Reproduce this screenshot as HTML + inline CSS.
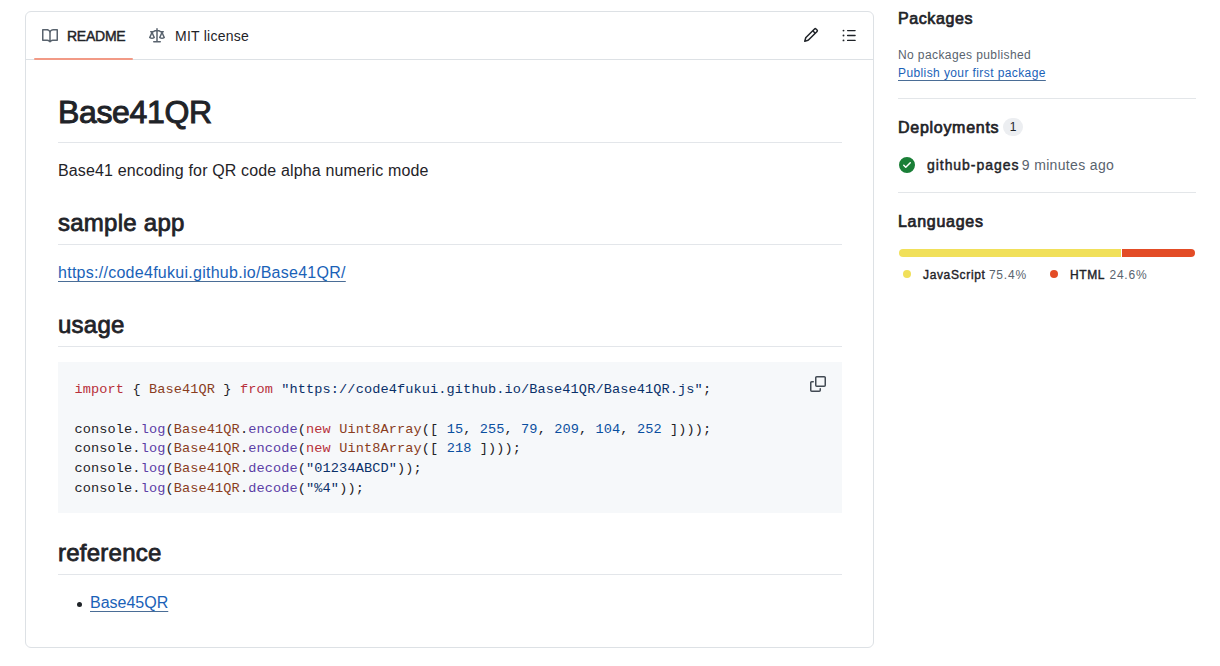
<!DOCTYPE html>
<html>
<head>
<meta charset="utf-8">
<style>
*{box-sizing:border-box;margin:0;padding:0}
html,body{width:1220px;height:666px;overflow:hidden;background:#fff}
body{font-family:"Liberation Sans",sans-serif;color:#1f2328;position:relative}
.card{position:absolute;left:25px;top:11px;width:849px;height:637px;border:1px solid #dde1e5;border-radius:6px}
.hdr{position:absolute;left:0;top:0;width:100%;height:48px;border-bottom:1px solid #dde1e5}
.tab{position:absolute;top:0;height:48px;font-size:14px;line-height:48px;white-space:nowrap}
.tab svg{position:absolute}
.ul{position:absolute;left:8px;top:46px;width:99px;height:2px;background:#f29a86;border-radius:2px}
.md{position:absolute;left:32px;top:80px;width:784px}
h1{font-size:32px;line-height:40px;font-weight:400;-webkit-text-stroke:1px #1f2328;letter-spacing:-.35px;padding-bottom:9.6px;border-bottom:1px solid #e3e6ea;margin-bottom:16px}
h2{font-size:24px;line-height:30px;font-weight:400;-webkit-text-stroke:.8px #1f2328;letter-spacing:.25px;padding-top:1px;padding-bottom:6.2px;border-bottom:1px solid #e3e6ea;margin-top:24px;margin-bottom:16px}
p{font-size:16px;line-height:24px;margin-bottom:16px;letter-spacing:.15px}
p a{letter-spacing:.27px}
a{color:#1a62b8;text-decoration:underline;text-underline-offset:.2rem;text-decoration-skip-ink:none;text-decoration-color:#4a6d96}
pre{background:#f6f8fa;border-radius:0;margin-top:-.5px;padding:17.8px 16px 14.7px 16.5px;font-family:"Liberation Mono",monospace;font-size:13.6px;line-height:19.72px;letter-spacing:.11px;margin-bottom:16px;position:relative;height:150.8px}
.k{color:#b8303b}.v{color:#8a3d1e}.en{color:#5b3ea6}.s{color:#0a3069}.c1{color:#0a4fa0}
ul{padding-left:32px;font-size:16px;line-height:24px;list-style:none;position:relative}
li:before{content:'';position:absolute;left:18.5px;top:10.5px;width:5px;height:5px;border-radius:50%;background:#1f2328}
.side{position:absolute;left:898px;top:0;width:298px}
.side h3{font-size:16px;font-weight:700;line-height:24px}
.sep{position:absolute;left:0;width:298px;height:1px;background:#e3e6e9}
.muted{color:#59636e}
.h3{position:absolute;left:0;font-size:16px;font-weight:400;-webkit-text-stroke:.7px #1f2328;letter-spacing:.72px;line-height:24px;white-space:nowrap}
.sm{position:absolute;left:0;font-size:12px;line-height:18px;white-space:nowrap;letter-spacing:.4px}
.counter{position:absolute;height:18px;min-width:20px;padding:0 6px;border-radius:9px;background:#eceef1;font-size:12px;font-weight:500;line-height:18px;text-align:center;color:#1f2328}
.bar{position:absolute;left:1px;width:296px;height:8px;border-radius:6px;overflow:hidden;display:flex}
.bar span{display:block;height:8px}
.legend{position:absolute;font-size:12px;line-height:18px;white-space:nowrap}
.legend i{display:inline-block;width:8px;height:8px;border-radius:50%;vertical-align:middle;margin-right:12px;position:relative;top:-1px}
.legend b{font-weight:700;color:#1f2328}

</style>
</head>
<body>
<div class="card">
  <div class="hdr">
    <div class="tab" style="left:16px">
      <svg style="left:0;top:16px" width="16" height="16" viewBox="0 0 16 16" fill="#59636e"><path d="M0 1.75A.75.75 0 0 1 .75 1h4.253c1.227 0 2.317.59 3 1.501A3.743 3.743 0 0 1 11.006 1h4.245a.75.75 0 0 1 .75.75v10.5a.75.75 0 0 1-.75.75h-4.507a2.25 2.25 0 0 0-1.591.659l-.622.621a.75.75 0 0 1-1.06 0l-.622-.621A2.25 2.25 0 0 0 5.258 13H.75a.75.75 0 0 1-.75-.75Zm7.251 10.324.004-5.073-.002-2.253A2.25 2.25 0 0 0 5.003 2.5H1.5v9h3.757a3.75 3.75 0 0 1 1.994.574ZM8.755 4.75l-.004 7.322a3.752 3.752 0 0 1 1.992-.572H14.5v-9h-3.495a2.25 2.25 0 0 0-2.25 2.25Z"/></svg>
      <span style="position:absolute;left:25px;-webkit-text-stroke:.45px #1f2328;letter-spacing:-.25px">README</span>
    </div>
    <div class="ul"></div>
    <div class="tab" style="left:123px">
      <svg style="left:0;top:16px" width="16" height="16" viewBox="0 0 16 16" fill="#59636e"><path d="M8.75.75V2h.985c.304 0 .603.08.867.231l1.29.736c.038.022.08.033.124.033h2.234a.75.75 0 0 1 0 1.5h-.427l2.111 4.692a.75.75 0 0 1-.154.838l-.53-.53.529.531-.001.002-.002.002-.006.006-.006.005-.01.01-.045.04c-.21.176-.441.327-.686.45C14.556 10.78 13.88 11 13 11a4.498 4.498 0 0 1-2.023-.454 3.544 3.544 0 0 1-.686-.45l-.045-.04-.016-.015-.006-.006-.004-.004v-.001a.75.75 0 0 1-.154-.838L12.178 4.5h-.162c-.305 0-.604-.079-.868-.231l-1.29-.736a.245.245 0 0 0-.124-.033H8.75V13h2.5a.75.75 0 0 1 0 1.5h-6.5a.75.75 0 0 1 0-1.5h2.5V3.5h-.984a.245.245 0 0 0-.124.033l-1.289.737c-.265.15-.564.23-.869.23h-.162l2.112 4.692a.75.75 0 0 1-.154.838l-.53-.53.529.531-.001.002-.002.002-.006.006-.016.015-.045.04c-.21.176-.441.327-.686.45C4.556 10.78 3.88 11 3 11a4.498 4.498 0 0 1-2.023-.454 3.544 3.544 0 0 1-.686-.45l-.045-.04-.016-.015-.006-.006-.004-.004v-.001a.75.75 0 0 1-.154-.838L2.178 4.5H1.75a.75.75 0 0 1 0-1.5h2.234a.249.249 0 0 0 .125-.033l1.288-.737c.265-.15.564-.23.869-.23h.984V.75a.75.75 0 0 1 1.5 0Zm2.945 8.477c.285.135.718.273 1.305.273s1.02-.138 1.305-.273L13 6.327Zm-10 0c.285.135.718.273 1.305.273s1.02-.138 1.305-.273L3 6.327Z"/></svg>
      <span style="position:absolute;left:26px;letter-spacing:.25px">MIT license</span>
    </div>
    <svg style="position:absolute;left:776.6px;top:15.3px" width="16" height="16" viewBox="0 0 16 16" fill="#1f2328"><path d="M11.013 1.427a1.75 1.75 0 0 1 2.474 0l1.086 1.086a1.75 1.75 0 0 1 0 2.474l-8.61 8.61c-.21.21-.47.364-.756.445l-3.251.93a.75.75 0 0 1-.927-.928l.929-3.25c.081-.286.235-.547.445-.758l8.61-8.61Zm.176 4.823L9.75 4.81l-6.286 6.287a.253.253 0 0 0-.064.108l-.558 1.953 1.953-.558a.253.253 0 0 0 .108-.064Zm1.238-3.763a.25.25 0 0 0-.354 0L10.811 3.75l1.439 1.44 1.263-1.263a.25.25 0 0 0 0-.354Z"/></svg>
    <svg style="position:absolute;left:814px;top:15px" width="20" height="18" viewBox="0 0 20 18" fill="none" stroke="#1f2328" stroke-width="1.35" stroke-linecap="round"><path d="M7.6 3.6H15.1M7.6 8.5H15.1M7.6 13.4H15.1"/><g fill="#1f2328" stroke="none"><circle cx="3.5" cy="3.6" r=".95"/><circle cx="3.5" cy="8.5" r=".95"/><circle cx="3.5" cy="13.4" r=".95"/></g></svg>
  </div>
  <div class="md">
    <h1>Base41QR</h1>
    <p>Base41 encoding for QR code alpha numeric mode</p>
    <h2>sample app</h2>
    <p><a>https://code4fukui.github.io/Base41QR/</a></p>
    <h2>usage</h2>
    <pre><span class="k">import</span> { <span class="v">Base41QR</span> } <span class="k">from</span> <span class="s">"https://code4fukui.github.io/Base41QR/Base41QR.js"</span>;

console.<span class="en">log</span>(<span class="v">Base41QR</span>.<span class="en">encode</span>(<span class="k">new</span> <span class="v">Uint8Array</span>([ <span class="c1">15</span>, <span class="c1">255</span>, <span class="c1">79</span>, <span class="c1">209</span>, <span class="c1">104</span>, <span class="c1">252</span> ])));
console.<span class="en">log</span>(<span class="v">Base41QR</span>.<span class="en">encode</span>(<span class="k">new</span> <span class="v">Uint8Array</span>([ <span class="c1">218</span> ])));
console.<span class="en">log</span>(<span class="v">Base41QR</span>.<span class="en">decode</span>(<span class="s">"01234ABCD"</span>));
console.<span class="en">log</span>(<span class="v">Base41QR</span>.<span class="en">decode</span>(<span class="s">"%4"</span>));<svg style="position:absolute;left:751.5px;top:14px" width="16" height="16" viewBox="0 0 16 16" fill="#424a53"><path d="M0 6.75C0 5.784.784 5 1.75 5h1.5a.75.75 0 0 1 0 1.5h-1.5a.25.25 0 0 0-.25.25v7.5c0 .138.112.25.25.25h7.5a.25.25 0 0 0 .25-.25v-1.5a.75.75 0 0 1 1.5 0v1.5A1.75 1.75 0 0 1 9.25 16h-7.5A1.75 1.75 0 0 1 0 14.25Z"/><path d="M5 1.75C5 .784 5.784 0 6.75 0h7.5C15.216 0 16 .784 16 1.75v7.5A1.75 1.75 0 0 1 14.25 11h-7.5A1.75 1.75 0 0 1 5 9.25Zm1.75-.25a.25.25 0 0 0-.25.25v7.5c0 .138.112.25.25.25h7.5a.25.25 0 0 0 .25-.25v-7.5a.25.25 0 0 0-.25-.25Z"/></svg></pre>
    <h2>reference</h2>
    <ul><li><a>Base45QR</a></li></ul>
  </div>
</div>
<div class="side">
  <div class="h3" style="top:6.5px;letter-spacing:.6px">Packages</div>
  <div class="muted sm" style="top:46px">No packages published</div>
  <a class="sm" style="top:64.3px">Publish your first package</a>
  <div class="sep" style="top:98px"></div>
  <div class="h3" style="top:116px">Deployments</div>
  <div class="counter" style="left:105px;top:118px">1</div>
  <svg style="position:absolute;left:1px;top:157px" width="16" height="16" viewBox="0 0 16 16" fill="#1a7f37"><path d="M8 16A8 8 0 1 1 8 0a8 8 0 0 1 0 16Zm3.78-9.72a.751.751 0 0 0-.018-1.042.751.751 0 0 0-1.042-.018L6.75 9.19 5.28 7.72a.751.751 0 0 0-1.042.018.751.751 0 0 0-.018 1.042l2 2a.75.75 0 0 0 1.06 0Z"/></svg>
  <div style="position:absolute;left:29px;top:155px;font-size:14px;line-height:20px;white-space:nowrap"><span style="letter-spacing:.95px;-webkit-text-stroke:.45px #1f2328">github-pages</span> <span class="muted" style="letter-spacing:.35px;margin-left:-1.5px">9 minutes ago</span></div>
  <div class="sep" style="top:192px"></div>
  <div class="h3" style="top:210px">Languages</div>
  <div class="bar" style="top:249px"><span style="width:75.4%;background:#f1e05a"></span><span style="width:24.6%;background:#e34c26;margin-left:1px"></span></div>
  <div class="legend" style="top:265.5px;left:5px"><i style="background:#f1e05a"></i><span style="letter-spacing:.65px;-webkit-text-stroke:.4px #1f2328">JavaScript</span> <span class="muted" style="letter-spacing:.8px">75.4%</span></div>
  <div class="legend" style="top:265.5px;left:152px"><i style="background:#e34c26"></i><span style="letter-spacing:.6px;-webkit-text-stroke:.4px #1f2328">HTML</span> <span class="muted" style="letter-spacing:.8px;margin-left:1px">24.6%</span></div>
</div>
</body>
</html>
